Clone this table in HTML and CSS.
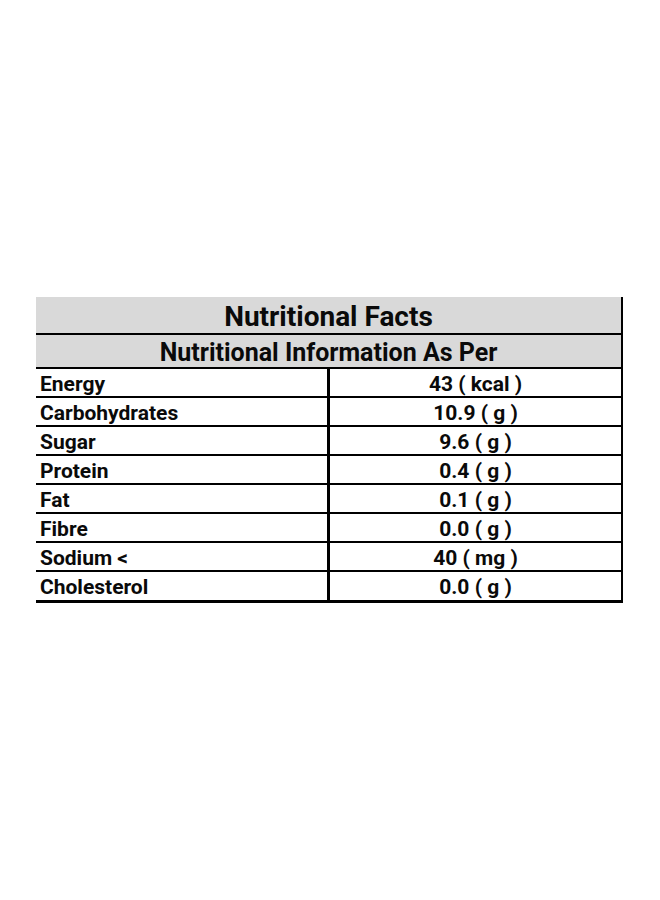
FILE: index.html
```html
<!DOCTYPE html>
<html>
<head>
<meta charset="utf-8">
<link rel="stylesheet" href="styles.css">
</head>
<body>
<div class="page">
  <div class="facts">
    <div class="title">Nutritional Facts</div>
    <div class="subtitle">Nutritional Information As Per</div>
    <div class="row"><div class="name">Energy</div><div class="val">43 ( kcal )</div></div>
    <div class="row"><div class="name">Carbohydrates</div><div class="val">10.9 ( g )</div></div>
    <div class="row"><div class="name">Sugar</div><div class="val">9.6 ( g )</div></div>
    <div class="row"><div class="name">Protein</div><div class="val">0.4 ( g )</div></div>
    <div class="row"><div class="name">Fat</div><div class="val">0.1 ( g )</div></div>
    <div class="row"><div class="name">Fibre</div><div class="val">0.0 ( g )</div></div>
    <div class="row"><div class="name">Sodium &lt;</div><div class="val">40 ( mg )</div></div>
    <div class="row last"><div class="name">Cholesterol</div><div class="val">0.0 ( g )</div></div>
  </div>
</div>
</body>
</html>
```
FILE: styles.css
```css
html, body {
  margin: 0;
  padding: 0;
  background: #ffffff;
}
.page {
  padding: 297px 0 0 36px;
}
.facts {
  width: 585px;
  border-right: 2px solid #000;
  font-family: Roboto, "Liberation Sans", sans-serif;
  font-weight: 700;
  color: #0a0a0a;
}
.title {
  height: 36px;
  line-height: 39px;
  background: #d9d9d9;
  text-align: center;
  font-size: 28px;
  border-bottom: 2px solid #000;
  overflow: hidden;
}
.subtitle {
  height: 32px;
  line-height: 35px;
  background: #d9d9d9;
  text-align: center;
  font-size: 25px;
  border-bottom: 2px solid #000;
  overflow: hidden;
}
.row {
  display: grid;
  grid-template-columns: 294px 1fr;
  height: 27px;
  border-bottom: 2px solid #000;
  font-size: 21px;
  line-height: 30px;
}
.row.last {
  height: 28px;
  border-bottom-width: 3px;
}
.name {
  padding-left: 4px;
  border-right: 3px solid #000;
  overflow: hidden;
}
.val {
  text-align: center;
  overflow: hidden;
}
```
